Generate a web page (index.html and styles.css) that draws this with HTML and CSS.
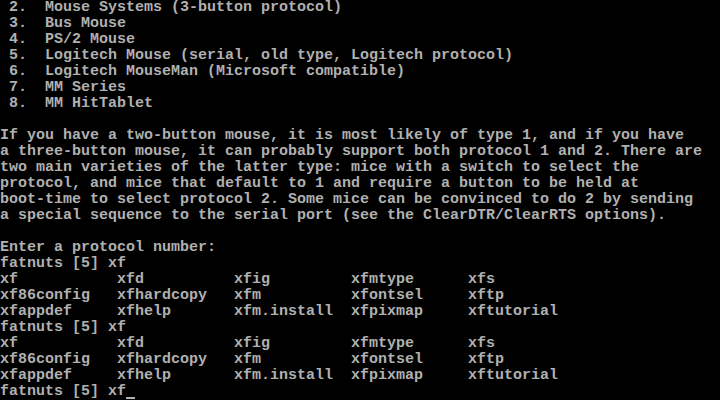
FILE: index.html
```html
<!DOCTYPE html>
<html lang="en">
  <head>
    <meta charset="utf-8">
    <title>Console</title>
    <link rel="stylesheet" href="styles.css">
  </head>
  <body>
    <pre class="console"> 2.  Mouse Systems (3-button protocol)
 3.  Bus Mouse
 4.  PS/2 Mouse
 5.  Logitech Mouse (serial, old type, Logitech protocol)
 6.  Logitech MouseMan (Microsoft compatible)
 7.  MM Series
 8.  MM HitTablet

If you have a two-button mouse, it is most likely of type 1, and if you have
a three-button mouse, it can probably support both protocol 1 and 2. There are
two main varieties of the latter type: mice with a switch to select the
protocol, and mice that default to 1 and require a button to be held at
boot-time to select protocol 2. Some mice can be convinced to do 2 by sending
a special sequence to the serial port (see the ClearDTR/ClearRTS options).

Enter a protocol number:
fatnuts [5] xf
xf           xfd          xfig         xfmtype      xfs
xf86config   xfhardcopy   xfm          xfontsel     xftp
xfappdef     xfhelp       xfm.install  xfpixmap     xftutorial
fatnuts [5] xf
xf           xfd          xfig         xfmtype      xfs
xf86config   xfhardcopy   xfm          xfontsel     xftp
xfappdef     xfhelp       xfm.install  xfpixmap     xftutorial
fatnuts [5] xf<span class="cursor"></span></pre>
  </body>
</html>
```

FILE: styles.css
```css
html,
body {
    margin: 0;
    background-color: #000;
}

.console {
    margin: 0;
    width: 720px;
    height: 400px;
    overflow: hidden;
    font-family: "Liberation Mono", "DejaVu Sans Mono", monospace;
    font-size: 15px;
    font-weight: bold;
    line-height: 16px;
    color: #b0b0b0;
    white-space: pre;
}

.cursor {
    display: inline-block;
    width: 9px;
    height: 16px;
    vertical-align: top;
    box-shadow: inset 0 -2px 0 #b0b0b0;
    margin-top: -1px;
}
```
